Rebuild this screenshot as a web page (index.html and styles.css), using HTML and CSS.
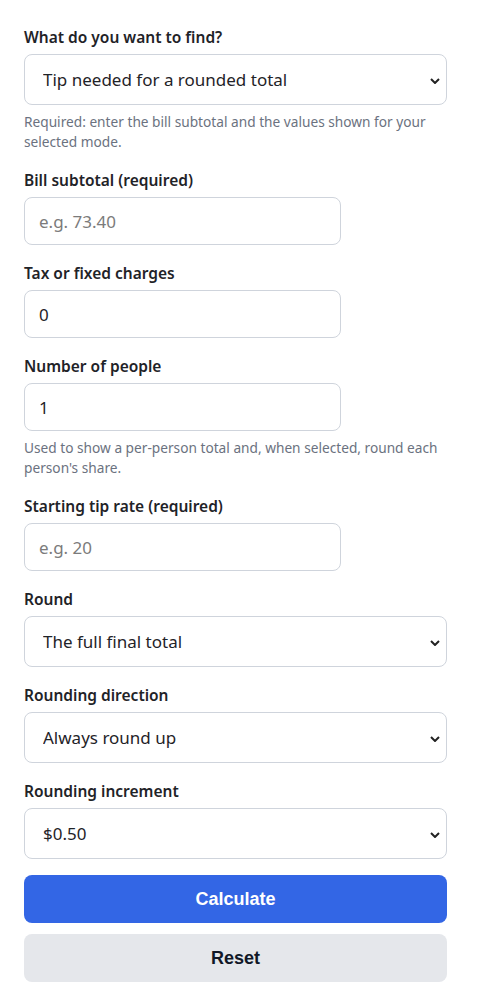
FILE: index.html
```html
<!DOCTYPE html>
<html lang="en">
<head>
    <meta charset="UTF-8">
    <meta name="viewport" content="width=device-width, initial-scale=1.0">
    <title>Rounded Tip Calculator</title>
    <link rel="stylesheet" href="styles.css">
</head>
<body>
    <form class="calc-form" onsubmit="return false;">
        <div class="field">
            <label class="field-label" for="mode">What do you want to find?</label>
            <div class="select-wrap">
                <select id="mode" class="control">
                    <option>Tip needed for a rounded total</option>
                    <option>Rounded total for a tip rate</option>
                </select>
                <svg class="chevron" viewBox="0 0 10 6" aria-hidden="true"><path d="M1 1l4 4 4-4"/></svg>
            </div>
            <p class="field-help">Required: enter the bill subtotal and the values shown for your selected mode.</p>
        </div>

        <div class="field">
            <label class="field-label" for="subtotal">Bill subtotal (required)</label>
            <input id="subtotal" class="control control-short" type="text" placeholder="e.g. 73.40">
        </div>

        <div class="field">
            <label class="field-label" for="tax">Tax or fixed charges</label>
            <input id="tax" class="control control-short" type="text" value="0">
        </div>

        <div class="field">
            <label class="field-label" for="people">Number of people</label>
            <input id="people" class="control control-short" type="text" value="1">
            <p class="field-help">Used to show a per-person total and, when selected, round each person's share.</p>
        </div>

        <div class="field">
            <label class="field-label" for="rate">Starting tip rate (required)</label>
            <input id="rate" class="control control-short" type="text" placeholder="e.g. 20">
        </div>

        <div class="field">
            <label class="field-label" for="round">Round</label>
            <div class="select-wrap">
                <select id="round" class="control">
                    <option>The full final total</option>
                    <option>Each person's share</option>
                </select>
                <svg class="chevron" viewBox="0 0 10 6" aria-hidden="true"><path d="M1 1l4 4 4-4"/></svg>
            </div>
        </div>

        <div class="field">
            <label class="field-label" for="direction">Rounding direction</label>
            <div class="select-wrap">
                <select id="direction" class="control">
                    <option>Always round up</option>
                    <option>Round to nearest</option>
                    <option>Always round down</option>
                </select>
                <svg class="chevron" viewBox="0 0 10 6" aria-hidden="true"><path d="M1 1l4 4 4-4"/></svg>
            </div>
        </div>

        <div class="field">
            <label class="field-label" for="increment">Rounding increment</label>
            <div class="select-wrap">
                <select id="increment" class="control">
                    <option>$0.50</option>
                    <option>$1.00</option>
                    <option>$5.00</option>
                </select>
                <svg class="chevron" viewBox="0 0 10 6" aria-hidden="true"><path d="M1 1l4 4 4-4"/></svg>
            </div>
        </div>

        <div class="actions">
            <button type="submit" class="btn btn-primary">Calculate</button>
            <button type="reset" class="btn btn-secondary">Reset</button>
        </div>
    </form>
</body>
</html>
```

FILE: styles.css
```css
:root {
    --text-main: #1f2328;
    --text-muted: #6b7280;
    --border: #cfd4dc;
    --blue: #3366e5;
    --grey-btn: #e5e7eb;
    --radius: 8px;
}

* {
    box-sizing: border-box;
}

body {
    margin: 0;
    padding: 25px 43px 24px 24px;
    font-family: 'Noto Sans', 'Open Sans', Arial, sans-serif;
    color: var(--text-main);
    background-color: #fff;
}

.calc-form {
    display: flex;
    flex-direction: column;
    gap: 16px;
}

.field {
    display: flex;
    flex-direction: column;
}

.field-label {
    font-size: 15.5px;
    font-weight: 600;
    line-height: 24px;
    margin-bottom: 5px;
}

.control {
    font-family: inherit;
    font-size: 17px;
    color: var(--text-main);
    height: 48px;
    padding: 0 14px;
    border: 1px solid var(--border);
    border-radius: var(--radius);
    background-color: #fff;
    width: 100%;
}

.control::placeholder {
    color: #7b7b7b;
}

.control-short {
    width: 75%;
}

.select-wrap {
    position: relative;
}

.select-wrap .control {
    appearance: none;
    -webkit-appearance: none;
    height: 51px;
    padding-left: 18px;
    padding-right: 36px;
}

.chevron {
    position: absolute;
    right: 7px;
    top: 50%;
    width: 10px;
    height: 6px;
    margin-top: -2px;
    fill: none;
    stroke: #222;
    stroke-width: 2;
    pointer-events: none;
}

.field-help {
    margin: 7px 0 0;
    font-size: 13.7px;
    line-height: 20px;
    color: var(--text-muted);
}

.actions {
    display: flex;
    flex-direction: column;
    gap: 11px;
}

.btn {
    height: 48px;
    border: none;
    border-radius: var(--radius);
    font-family: 'Liberation Sans', Arial, sans-serif;
    font-size: 18px;
    font-weight: 700;
    cursor: pointer;
}

.btn-primary {
    background-color: var(--blue);
    color: #fff;
}

.btn-secondary {
    background-color: var(--grey-btn);
    color: #111827;
}
```
